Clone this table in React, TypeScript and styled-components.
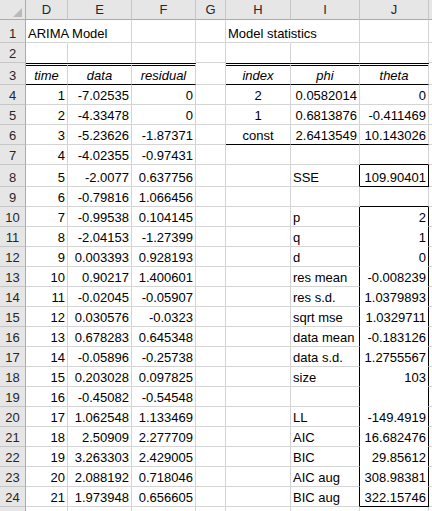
import React from 'react';
import styled, { createGlobalStyle } from 'styled-components';

const GlobalStyle = createGlobalStyle`
  html, body { margin: 0; padding: 0; background: #ffffff; overflow: hidden; }
  body { font-family: "Liberation Sans", Arial, sans-serif; }
`;

type Align = 'left' | 'right' | 'center';
type Edge = 'grid' | 'none' | 'black';

interface CellSpec {
  text?: string;
  align?: Align;
  italic?: boolean;
  right?: Edge;
  bottom?: Edge;
  doubleTop?: boolean;
}

const COLS = ['D', 'E', 'F', 'G', 'H', 'I', 'J', 'K'];
const VISIBLE_COL_LABELS = ['D', 'E', 'F', 'G', 'H', 'I', 'J', ''];
const COL_WIDTHS = [42, 64, 64, 30, 65, 69, 69, 64];
const ROWS = Array.from({ length: 25 }, (_, i) => i + 1);
const ROW_HEIGHTS: Record<number, number> = { 1: 23, 3: 22, 8: 22 };
const rowHeight = (r: number) => ROW_HEIGHTS[r] ?? 20;

const edgeColor = (e: Edge) => (e === 'black' ? '#000000' : e === 'none' ? 'transparent' : '#d4d4d4');

const leftData: [string, string, string][] = [
  ['1', '-7.02535', '0'],
  ['2', '-4.33478', '0'],
  ['3', '-5.23626', '-1.87371'],
  ['4', '-4.02355', '-0.97431'],
  ['5', '-2.0077', '0.637756'],
  ['6', '-0.79816', '1.066456'],
  ['7', '-0.99538', '0.104145'],
  ['8', '-2.04153', '-1.27399'],
  ['9', '0.003393', '0.928193'],
  ['10', '0.90217', '1.400601'],
  ['11', '-0.02045', '-0.05907'],
  ['12', '0.030576', '-0.0323'],
  ['13', '0.678283', '0.645348'],
  ['14', '-0.05896', '-0.25738'],
  ['15', '0.203028', '0.097825'],
  ['16', '-0.45082', '-0.54548'],
  ['17', '1.062548', '1.133469'],
  ['18', '2.50909', '2.277709'],
  ['19', '3.263303', '2.429005'],
  ['20', '2.088192', '0.718046'],
  ['21', '1.973948', '0.656605'],
];

const coefData: [string, string, string][] = [
  ['2', '0.0582014', '0'],
  ['1', '0.6813876', '-0.411469'],
  ['const', '2.6413549', '10.143026'],
];

const stats: Record<number, [string, string]> = {
  8: ['SSE', '109.90401'],
  10: ['p', '2'],
  11: ['q', '1'],
  12: ['d', '0'],
  13: ['res mean', '-0.008239'],
  14: ['res s.d.', '1.0379893'],
  15: ['sqrt mse', '1.0329711'],
  16: ['data mean', '-0.183126'],
  17: ['data s.d.', '1.2755567'],
  18: ['size', '103'],
  20: ['LL', '-149.4919'],
  21: ['AIC', '16.682476'],
  22: ['BIC', '29.85612'],
  23: ['AIC aug', '308.98381'],
  24: ['BIC aug', '322.15746'],
};

function buildCells(): CellSpec[][] {
  const grid: CellSpec[][] = ROWS.map(() => COLS.map(() => ({ right: 'grid', bottom: 'grid', align: 'left' } as CellSpec)));
  const at = (row: number, col: string) => grid[row - 1][COLS.indexOf(col)];
  const set = (row: number, col: string, spec: CellSpec) => Object.assign(at(row, col), spec);

  set(1, 'D', { text: 'ARIMA Model', right: 'none' });
  set(1, 'H', { text: 'Model statistics', right: 'none' });

  ['D', 'E', 'F', 'H', 'I', 'J'].forEach((c) => set(2, c, { bottom: 'none' }));
  const heads: [string, string][] = [
    ['D', 'time'], ['E', 'data'], ['F', 'residual'],
    ['H', 'index'], ['I', 'phi'], ['J', 'theta'],
  ];
  heads.forEach(([c, t]) => set(3, c, { text: t, italic: true, align: 'center', doubleTop: true, bottom: 'black' }));

  leftData.forEach(([a, b, c], i) => {
    const r = i + 4;
    set(r, 'D', { text: a, align: 'right' });
    set(r, 'E', { text: b, align: 'right' });
    set(r, 'F', { text: c, align: 'right' });
  });

  coefData.forEach(([a, b, c], i) => {
    const r = i + 4;
    set(r, 'H', { text: a, align: 'center' });
    set(r, 'I', { text: b, align: 'right' });
    set(r, 'J', { text: c, align: 'right' });
  });
  ['H', 'I', 'J'].forEach((c) => set(6, c, { bottom: 'black' }));

  set(7, 'J', { bottom: 'black' });
  set(8, 'I', { right: 'black' });
  set(8, 'J', { right: 'black', bottom: 'black' });
  set(9, 'J', { bottom: 'black' });
  for (let r = 10; r <= 24; r++) {
    set(r, 'I', { right: 'black' });
    set(r, 'J', { right: 'black', bottom: r === 24 ? 'black' : 'none' });
  }
  Object.entries(stats).forEach(([k, [label, value]]) => {
    const r = Number(k);
    set(r, 'I', { text: label, align: 'left' });
    set(r, 'J', { text: value, align: 'right' });
  });
  return grid;
}

const Sheet = styled.div`
  display: grid;
  grid-template-columns: 26px ${COL_WIDTHS.map((w) => `${w}px`).join(' ')};
  grid-template-rows: 20px ${ROWS.map((r) => `${rowHeight(r)}px`).join(' ')};
  width: 432px;
  height: 511px;
  overflow: hidden;
  font-size: 13px;
  color: #000000;
`;

const Corner = styled.div`
  box-sizing: border-box;
  background: #e6e6e6;
  border-right: 1px solid #ababab;
  border-bottom: 1px solid #ababab;
  display: flex;
  align-items: flex-end;
  justify-content: flex-end;
  padding: 0 3px 2px 0;
`;

const ColHeader = styled.div`
  box-sizing: border-box;
  background: #e6e6e6;
  border-right: 1px solid #c6c6c6;
  border-bottom: 1px solid #ababab;
  display: flex;
  align-items: center;
  justify-content: center;
  color: #262626;
  line-height: 14px;
  padding-top: 1px;
  overflow: hidden;
`;

const RowHeader = styled.div`
  box-sizing: border-box;
  background: #e6e6e6;
  border-right: 1px solid #ababab;
  border-bottom: 1px solid #c6c6c6;
  display: flex;
  align-items: flex-end;
  justify-content: center;
  color: #262626;
  line-height: 14px;
  padding-bottom: 1px;
`;

const Cell = styled.div<{ $align: Align; $italic?: boolean; $right: Edge; $bottom: Edge; $doubleTop?: boolean }>`
  box-sizing: border-box;
  display: flex;
  align-items: flex-end;
  justify-content: ${(p) => (p.$align === 'left' ? 'flex-start' : p.$align === 'right' ? 'flex-end' : 'center')};
  padding: 0 2px 1px 2px;
  min-width: 0;
  white-space: nowrap;
  line-height: 14px;
  font-style: ${(p) => (p.$italic ? 'italic' : 'normal')};
  border-right: 1px solid ${(p) => edgeColor(p.$right)};
  border-bottom: 1px solid ${(p) => edgeColor(p.$bottom)};
  border-top: ${(p) => (p.$doubleTop ? '3px double #000000' : 'none')};
`;

const CornerMark = () => (
  <svg width="9" height="9" viewBox="0 0 9 9">
    <polygon points="9,0 9,9 0,9" fill="#b9b9b9" />
  </svg>
);

export default function App() {
  const cells = buildCells();
  return (
    <>
      <GlobalStyle />
      <Sheet>
        <Corner>
          <CornerMark />
        </Corner>
        {VISIBLE_COL_LABELS.map((c, i) => (
          <ColHeader key={COLS[i]}>{c}</ColHeader>
        ))}
        {ROWS.map((r, ri) => (
          <React.Fragment key={r}>
            <RowHeader>{r <= 24 ? r : ''}</RowHeader>
            {cells[ri].map((cell, ci) => (
              <Cell
                key={`${r}-${ci}`}
                $align={cell.align ?? 'left'}
                $italic={cell.italic}
                $right={cell.right ?? 'grid'}
                $bottom={cell.bottom ?? 'grid'}
                $doubleTop={cell.doubleTop}
              >
                {cell.text}
              </Cell>
            ))}
          </React.Fragment>
        ))}
      </Sheet>
    </>
  );
}
